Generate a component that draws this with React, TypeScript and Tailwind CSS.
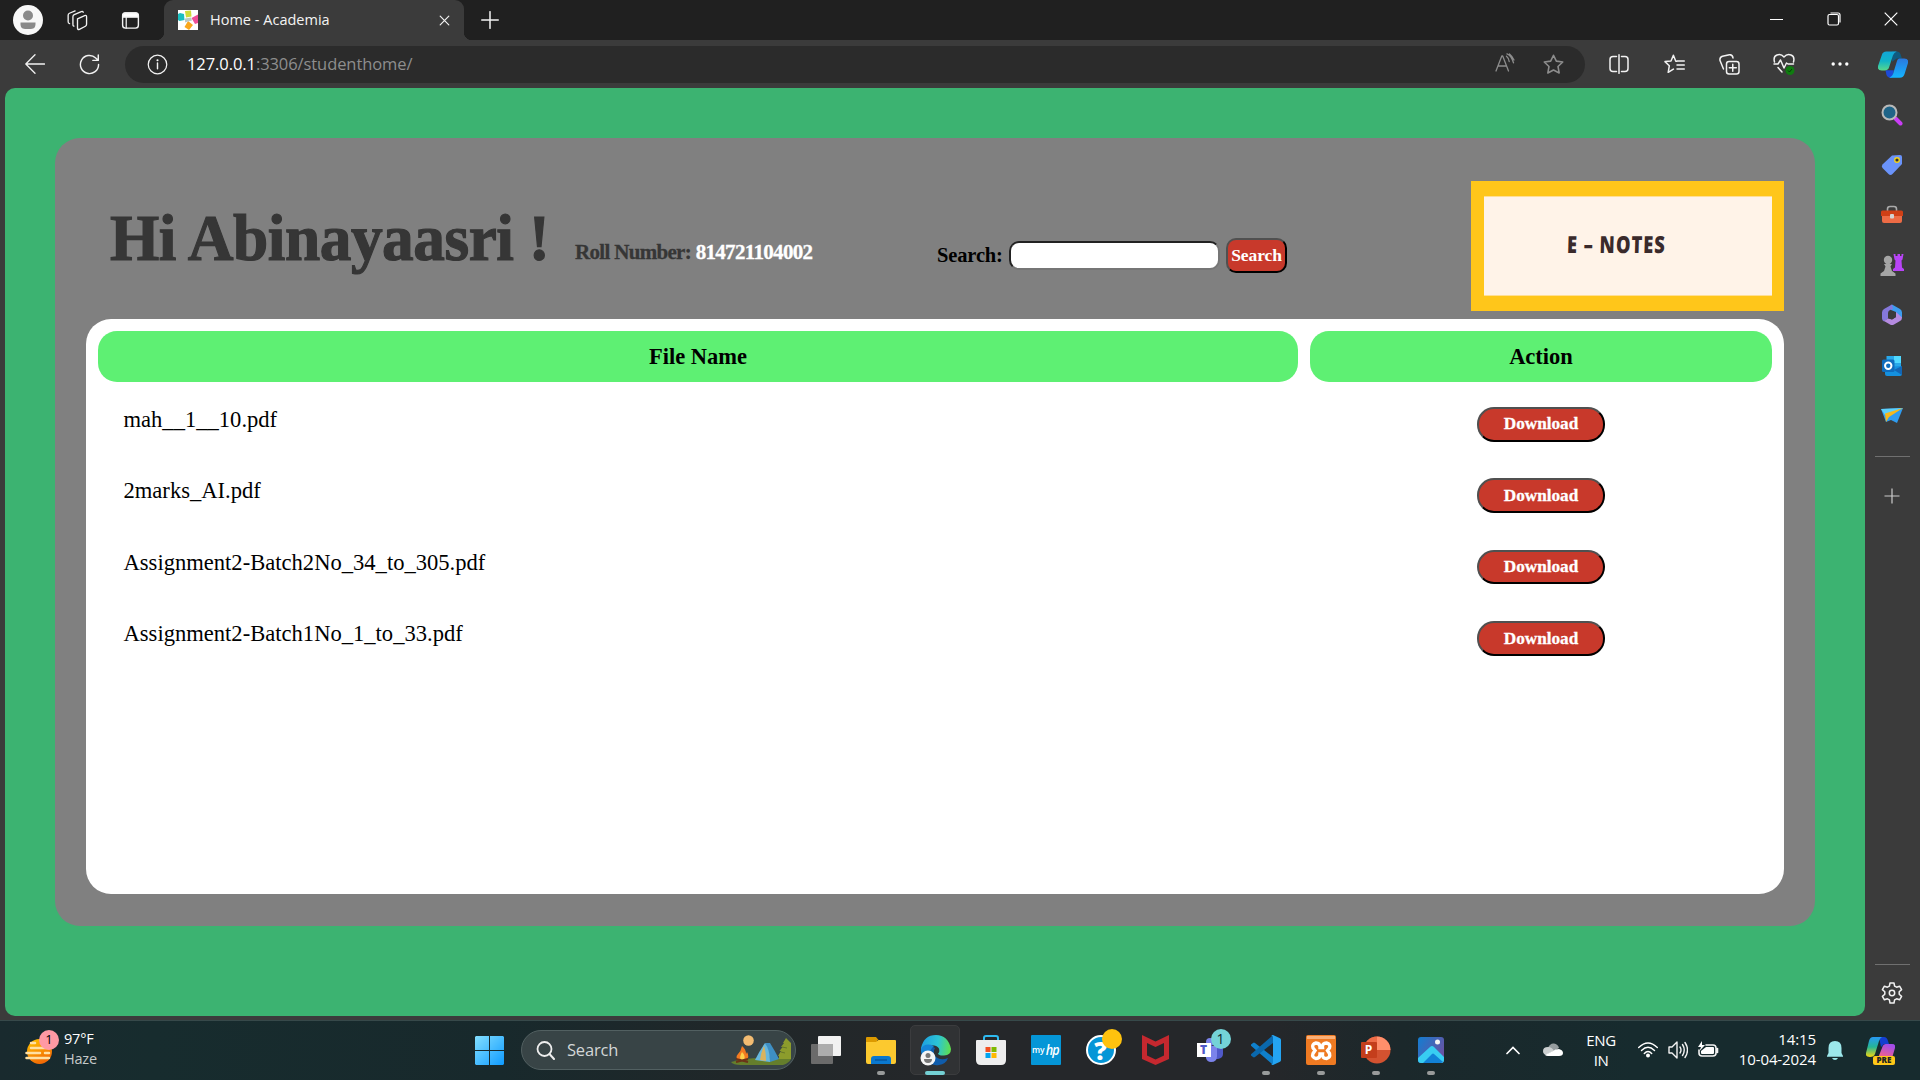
import React from "react";

type IconProps = { w?: number; h?: number; box: string; children: React.ReactNode; className?: string };

function Svg({ w = 24, h = 24, box, children, className }: IconProps) {
  return (
    <svg width={w} height={h} viewBox={box} fill="none" className={className ?? "block shrink-0"}>
      {children}
    </svg>
  );
}

const line = { stroke: "#f2f2f2", strokeWidth: 1.3, strokeLinecap: "round" as const, strokeLinejoin: "round" as const };
const dim = { ...line, stroke: "#8d8d8d" };

function Slot({ className, children }: { className: string; children: React.ReactNode }) {
  return <div className={"flex shrink-0 items-center justify-center " + className}>{children}</div>;
}

function CopilotLogo({ w = 32, h = 28 }: { w?: number; h?: number }) {
  return (
    <Svg w={w} h={h} box="0 0 32 28">
      <defs>
        <linearGradient id="cpA" x1="0" y1="0" x2="0" y2="1">
          <stop offset="0" stopColor="#12a5d8" />
          <stop offset="0.5" stopColor="#10b3c8" />
          <stop offset="1" stopColor="#59d98a" />
        </linearGradient>
        <linearGradient id="cpB" x1="0" y1="0" x2="0" y2="1">
          <stop offset="0" stopColor="#2b78de" />
          <stop offset="1" stopColor="#14b4ff" />
        </linearGradient>
      </defs>
      <path d="M15 0h5q3 0 4 3l1.500 4.500H20L15 11z" fill="#0f5a80" />
      <path d="M8 20h9l-2 8h-2q-3 0-4-3z" fill="#1d4bd8" />
      <path d="M9 0h11q-3 1-4 4l-4 12.500q-1 4-5 4H4q-5 0-4-5L4 4q1-4 5-4z" fill="url(#cpA)" />
      <path d="M23 7.500h5q5 0 4 5l-3.500 11q-1 4.500-5.500 4.500H12q3-1 4-4l4-13q1-3.500 3-3.500z" fill="url(#cpB)" />
    </Svg>
  );
}

function TitleBar() {
  return (
    <div className="flex h-10 shrink-0 bg-[#202020]">
      <Slot className="w-[56px]">
        <Svg w={30} h={30} box="0 0 30 30">
          <circle cx="15" cy="15" r="15" fill="#f8f8f8" />
          <circle cx="15" cy="10.500" r="5" fill="#8a8a8a" />
          <path d="M7.500 17.500h15c.4 7-3 6.500-7.500 6.500s-7.900.5-7.500-6.500z" fill="#8a8a8a" />
        </Svg>
      </Slot>
      <Slot className="w-[42px]">
        <Svg w={21} h={21} box="0 0 22 22">
          <g {...line} strokeWidth="1.400">
            <path d="M11 9.200l7.500-3.400q2-.7 2 1.200v8q0 1.400-1.200 2L13 20.200q-2 .8-2-1.300z" />
            <path d="M7.200 17q-1.200-.5-1-2V7q0-1.500 1.400-2.200L15 1.600q1.500-.5 2 .7" />
            <path d="M2.700 14.200Q1 14 1.200 12.200V5.500Q1.200 4 2.600 3.400L8.500 1" />
          </g>
        </Svg>
      </Slot>
      <Slot className="w-[64px]">
        <Svg w={19} h={19} box="0 0 20 20">
          <rect x="1.700" y="2" width="16.600" height="16" rx="3" {...line} strokeWidth="1.500" />
          <path d="M1.700 6.500V4.500Q2 2 4.500 2h11q2.500 0 2.800 2.500v2zM5.500 6v12" fill="#fff" {...line} />
        </Svg>
      </Slot>
      <div className="relative ml-[2px] flex w-[300px] items-center rounded-t-[9px] bg-[#3b3b3b] pl-[14px]">
        <div className="absolute bottom-0 -left-2 size-2 bg-[radial-gradient(circle_at_0_0,#202020_8px,#3b3b3b_8.5px)]" />
        <div className="absolute -right-2 bottom-0 size-2 bg-[radial-gradient(circle_at_100%_0,#202020_8px,#3b3b3b_8.5px)]" />
        <Svg w={20} h={20} box="0 0 20 20">
          <path d="M0 0h20v20H0z" fill="#fff" />
          <path d="M7 1l6-.5.5 6L8 7.500z" fill="#cddc39" />
          <path d="M0 4l2-1 4 1 .5 6-5 1L0 10z" fill="#19bfc0" />
          <path d="M13.500 8L20 4.500V13l-3 1z" fill="#ee4e96" />
          <path d="M10 11l5 4-4 5-4.500-3z" fill="#f9a61c" />
          <path d="M7 8.500l6-1 1 3-4 1-3 1z" fill="#b9c9c6" />
        </Svg>
        <span className="ml-[12px] font-['Open_Sans'] text-[14.500px] tracking-[0.010px] whitespace-nowrap text-[#f3f3f3]">Home - Academia</span>
        <Svg w={11} h={11} box="0 0 12 12" className="mr-[14px] ml-auto block">
          <path d="M1.300 1.300l9.400 9.400M10.700 1.300L1.300 10.700" {...line} />
        </Svg>
      </div>
      <Slot className="w-[52px]">
        <Svg w={18} h={18} box="0 0 18 18">
          <path d="M9 .7v16.600M.7 9h16.600" {...line} strokeWidth="1.500" />
        </Svg>
      </Slot>
      <div className="ml-auto flex h-[38px] pr-[1px]">
        <Slot className="w-[57px]">
          <div className="h-px w-[13px] bg-white" />
        </Slot>
        <Slot className="w-[57px]">
          <Svg w={14} h={14} box="0 0 14 14">
            <g stroke="#fff" strokeWidth="1.200">
              <rect x="1" y="2.500" width="10.500" height="10.500" rx="1.500" />
              <path d="M3.500 1h7.500q2 0 2 2v7.500" />
            </g>
          </Svg>
        </Slot>
        <Slot className="w-[57px]">
          <Svg w={14} h={14} box="0 0 14 14">
            <path d="M.7.7l12.600 12.600M13.300.7L.7 13.300" stroke="#fff" strokeWidth="1.200" />
          </Svg>
        </Slot>
      </div>
    </div>
  );
}

const starPath = "M10 1.200l2.700 5.600 6.100.8-4.500 4.300 1.100 6.200L10 15.200l-5.400 2.900 1.100-6.200L1.200 7.600l6.100-.8z";

function Toolbar() {
  return (
    <div className="flex h-12 shrink-0 items-center bg-[#3b3b3b] pl-[7px]">
      <Slot className="w-[56px]">
        <Svg w={20} h={20} box="0 0 20 20" className="-mt-px block">
          <path d="M19.500 10H.8M10 .8L.8 10l9.200 9.200" {...line} />
        </Svg>
      </Slot>
      <Slot className="w-[53px]">
        <Svg w={21} h={21} box="0 0 22 22">
          <path d="M20.500 11a9.500 9.500 0 1 1-3-6.900l2.500 2.400M20.200 1v5.700h-5.700" {...line} strokeWidth="1.500" />
        </Svg>
      </Slot>
      <div className="ml-[9px] flex h-[37px] w-[1460px] items-center rounded-full bg-[#2b2b2b] pr-[7px]">
        <Svg w={21} h={21} box="0 0 22 22" className="ml-[22px] block">
          <circle cx="11" cy="11" r="9.700" {...line} />
          <path d="M11 9.500v6" {...line} strokeWidth="1.500" />
          <circle cx="11" cy="6.500" r="1.100" fill="#fff" />
        </Svg>
        <span className="ml-[19px] font-['Open_Sans'] text-[16.500px] tracking-[-0.080px] whitespace-nowrap text-[#8e8e8e]">
          <span className="text-white">127.0.0.1</span>:3306/studenthome/
        </span>
        <Slot className="ml-auto w-[49px]">
          <Svg w={20} h={20} box="0 0 20 20" className="-mt-[2px] block">
            <path d="M1 18L6.800 3h.9l5.800 15M3 13h8.500M11.500 3.200q2.400 2 2.700 5.300M12 .8q4.200 1.500 6.500 9M14.500 1q2.500 2 4.500 6" {...dim} />
          </Svg>
        </Slot>
        <Slot className="w-[49px]">
          <Svg w={21} h={21} box="0 0 20 20">
            <path d={starPath} {...dim} strokeWidth="1.500" />
          </Svg>
        </Slot>
      </div>
      <Slot className="ml-[6px] w-[55px]">
        <Svg w={20} h={20} box="0 0 20 20">
          <path d="M7.500 2.500H4Q1 2.500 1 5.500v9q0 3 3 3h3.500M12.500 2.500H16q3 0 3 3v9q0 3-3 3h-3.500M10 .8v18.500" {...line} strokeWidth="1.500" />
        </Svg>
      </Slot>
      <Slot className="w-[56px]">
        <Svg w={21} h={20} box="0 0 21 20">
          <path d="M13 7.200h-1.200L9.400 1.200 7 7 1 7.600l4.300 4.200-1.100 6.500 5.200-3.200M13 7h7.300M13 11h7.300M13 15h7.300" {...line} strokeWidth="1.500" />
        </Svg>
      </Slot>
      <Slot className="w-[54px]">
        <Svg w={21} h={21} box="0 0 21 21">
          <rect x="7.500" y="7.500" width="12.500" height="12.500" rx="2.500" {...line} strokeWidth="1.500" />
          <path d="M13.750 10.300v7M10.300 13.750h7M4.500 15L1 6.500Q.5 3 3.500 2.200l7-1.500q3-.3 3.500 3.300" {...line} strokeWidth="1.500" />
        </Svg>
      </Slot>
      <Slot className="w-[56px]">
        <Svg w={22} h={22} box="0 0 22 22">
          <path d="M1.500 9Q0 3.500 4 2q4-1.500 7 2 3-3.500 7-2 4 1.500 2.500 7M1 11h4l2.500-4 3.500 8 2.500-5 1.500 1h5.500M5 14.500L9 19" {...line} strokeWidth="1.500" />
          <circle cx="17" cy="17.500" r="4.500" fill="#107c10" />
          <path d="M15 17.500l1.500 1.500 2.500-3" stroke="#063d06" />
        </Svg>
      </Slot>
      <Slot className="w-[55px]">
        <Svg w={18} h={6} box="0 0 18 6">
          <g fill="#fff">
            <circle cx="2.200" cy="3" r="1.700" />
            <circle cx="9" cy="3" r="1.700" />
            <circle cx="15.800" cy="3" r="1.700" />
          </g>
        </Svg>
      </Slot>
      <Slot className="w-[52px]">
        <CopilotLogo w={30} h={27} />
      </Slot>
    </div>
  );
}

function SideBar() {
  const s = "h-[50.200px] w-full";
  return (
    <div className="flex h-[932px] w-[54px] shrink-0 flex-col items-center pt-[1.500px]">
      <Slot className={s}>
        <Svg w={22} h={22} box="0 0 22 22">
          <path d="M14.500 14.500l5 5" stroke="#c93df5" strokeWidth="4" strokeLinecap="round" />
          <circle cx="8.500" cy="8.500" r="7" fill="#1f6488" stroke="#b9b9b9" strokeWidth="2" />
        </Svg>
      </Slot>
      <Slot className={s}>
        <Svg w={22} h={22} box="0 0 22 22">
          <path d="M11 1.500L19 1q2 0 2 2v7l-9.500 10q-2 2-4 0l-6-6q-1.500-2 0-3.500z" fill="#6a93fa" />
          <circle cx="16" cy="6" r="2.300" fill="#333" stroke="#f3d21c" strokeWidth="1.400" />
        </Svg>
      </Slot>
      <Slot className={s}>
        <Svg w={24} h={20} box="0 0 24 20">
          <path d="M7.500 6V4q0-2.500 2.500-2.500h4Q16.500 1.500 16.500 4v2" stroke="#aaa" strokeWidth="1.600" />
          <path d="M2 10h20v6q0 2-2 2H4q-2 0-2-2z" fill="#ed6b45" />
          <path d="M1 7q0-1.500 1.500-1.500h19Q23 5.500 23 7v4H1z" fill="#cf3f16" />
          <rect x="10" y="9" width="4" height="4.500" rx="1" fill="#d3d3d3" />
        </Svg>
      </Slot>
      <Slot className={s}>
        <Svg w={24} h={24} box="0 0 24 24">
          <path d="M13.500 1h2v2h2V1h2.500v2h1.500V1h2l-1 5.500-1 1 .5 7 2 1.500v2H13v-2l2-1.500.5-7-1-1z" fill="#b844f7" />
          <circle cx="8" cy="7" r="4.200" fill="#a5a5a5" />
          <path d="M4 11h8l-1.500 2.500L12 18l3.500 2.500V23H.5v-2.500L4 18l1.500-4.500z" fill="#a5a5a5" />
        </Svg>
      </Slot>
      <Slot className={s}>
        <Svg w={22} h={22} box="0 0 22 22">
          <path d="M11 .5l8 4.500q2 1 2 3.500v6l-6-3V8l-5-2-2-3z" fill="#3d9df0" />
          <path d="M11 .5L3 5Q1 6 1 8.500v6q0 2 2 3l4-3V9q0-2 2-3l3-1z" fill="#8578db" />
          <path d="M21 13.500q0 2.500-2 3.500l-6 3.500q-2 1-4 0l-6-3.500 4-2.500 4 1 4-2.500V8z" fill="#b58be0" />
          <path d="M8 8.500l3-1.500 4 2v4l-4 2.500L8 14z" fill="#3b3b3b" />
        </Svg>
      </Slot>
      <Slot className={s}>
        <Svg w={20} h={20} box="0 0 20 20">
          <path d="M4.500 0H18q1 0 1 1v10H4.500z" fill="#28a8ea" />
          <path d="M12 0h7v7h-7z" fill="#50d9ff" />
          <path d="M3 11l16-1 1 1v7q0 2-2 2H5q-2 0-2-2z" fill="#1490df" />
          <path d="M12 14l8-4v9z" fill="#1366b5" />
          <rect x="0" y="3.500" width="12.500" height="12.500" rx="1.500" fill="#0f6cbd" />
          <circle cx="6.250" cy="9.750" r="3.200" stroke="#fff" strokeWidth="2" />
        </Svg>
      </Slot>
      <Slot className={s}>
        <Svg w={22} h={17} box="0 0 22 17">
          <path d="M0 2L22 1l-6 15-6-3-5 2z" fill="#2f9cf0" />
          <path d="M0 2L22 1 4 8z" fill="#5dd0fa" />
          <path d="M22 1L4 6.500l1 8.500 3-5z" fill="#f5b81c" />
        </Svg>
      </Slot>
      <div className="mt-[15.500px] h-px w-[35px] shrink-0 bg-[#707070]" />
      <Svg w={16} h={16} box="0 0 16 16" className="mt-[31px] block">
        <path d="M8 .5v15M.5 8h15" stroke="#ccc" strokeWidth="1.200" />
      </Svg>
      <div className="mt-auto h-px w-[35px] shrink-0 bg-[#707070]" />
      <Svg w={22} h={22} box="0 0 22 22" className="mt-[17px] mb-[16px] block">
        <path d="M9 1h4l.6 3.100 2 1.100 3-1 2 3.400-2.400 2.100v2.600l2.400 2.100-2 3.400-3-1-2 1.100L13 21H9l-.6-3.100-2-1.100-3 1-2-3.400 2.400-2.100V9.700L1.400 7.600l2-3.400 3 1 2-1.100z" {...line} strokeWidth="1.500" />
        <circle cx="11" cy="11" r="2.700" {...line} strokeWidth="1.500" />
      </Svg>
    </div>
  );
}

const files = [
  "mah__1__10.pdf",
  "2marks_AI.pdf",
  "Assignment2-Batch2No_34_to_305.pdf",
  "Assignment2-Batch1No_1_to_33.pdf",
];

const redButton =
  "shrink-0 border-2 border-t-[#505050] border-l-[#505050] border-r-black border-b-black bg-[#c8392b] font-bold text-white";

function StudentHome() {
  return (
    <div className="h-[928px] w-[1860px] shrink-0 rounded-[10px] bg-[#3cb371] pt-[50px] pl-[50px] font-['Liberation_Serif']">
      <div className="h-[788px] w-[1760px] rounded-[25px] bg-[#808080] px-[31px] pt-[43px]">
        <div className="flex h-[138px] w-[1698px]">
          <h1 className="mt-[12px] ml-[24px] w-[440px] origin-left scale-x-[0.960] text-[66px] leading-[90px] font-bold tracking-[-0.500px] whitespace-nowrap text-[#363636] [-webkit-text-stroke:1.2px_#363636]">
            Hi Abinayaasri !
          </h1>
          <p className="mt-[56px] ml-[25px] w-[240px] text-[21px] leading-[30px] font-bold tracking-[-0.680px] whitespace-nowrap text-[#363636] [-webkit-text-stroke:0.3px]">
            Roll Number: <span className="text-white">814721104002</span>
          </p>
          <div className="mt-[57px] ml-[122px] flex h-[35px] items-center">
            <label className="-mt-[1px] w-[72px] text-[20.500px] font-bold tracking-[-0.150px] whitespace-nowrap text-black">Search:</label>
            <input className="h-[29px] w-[211px] rounded-[10px] border-2 border-t-[#222] border-r-[#767676] border-b-[#767676] border-l-[#222] bg-white" />
            <button className={redButton + " ml-[6px] h-[35px] w-[61px] rounded-[10px] text-[17.500px] tracking-[-0.100px]"}>Search</button>
          </div>
          <div className="ml-auto h-[130px] w-[313px] bg-[#ffc61a] px-[12.500px] py-[15px]">
            <div className="flex h-full items-center justify-center border-y border-[#ffdf93] bg-[#fff3e8]">
              <span className="-mt-[3px] -ml-[23px] scale-x-[0.780] -skew-x-2 font-['Open_Sans'] text-[23.500px] font-extrabold tracking-[1.250px] whitespace-nowrap text-[#3a2a2b]">
                E – NOTES
              </span>
            </div>
          </div>
        </div>
        <div className="h-[575px] w-[1698px] rounded-[25px] bg-white p-[12px]">
          <div className="flex gap-[12px] text-center text-[22.500px] leading-[51px] font-bold text-black">
            <div className="h-[51px] w-[1200px] rounded-[19px] bg-[#5ef073]">File Name</div>
            <div className="h-[51px] w-[462px] rounded-[19px] bg-[#5ef073]">Action</div>
          </div>
          {files.map((name) => (
            <div key={name} className="flex h-[71.400px] gap-[12px]">
              <div className="w-[1200px] pt-[25px] pl-[25.500px] text-[22.580px] leading-[26px] text-black">{name}</div>
              <div className="flex w-[462px] justify-center pt-[25px]">
                <button className={redButton + " h-[34.500px] w-[128px] rounded-[17px] text-[17.200px] [-webkit-text-stroke:0.300px]"}>Download</button>
              </div>
            </div>
          ))}
        </div>
      </div>
    </div>
  );
}

function TaskApp({ children, running, active }: { children: React.ReactNode; running?: boolean; active?: boolean }) {
  return (
    <div className="relative flex h-[60px] w-[55px] shrink-0 items-center justify-center">
      {active && <div className="absolute top-[4px] left-[2px] h-[50px] w-[50px] rounded-[5px] border border-[#3b3c3e] bg-[#303234]" />}
      <div className="relative -mt-px">{children}</div>
      {running && <div className="absolute bottom-[6px] left-[24px] h-[4px] w-[8px] rounded-full bg-[#999b9b]" />}
      {active && <div className="absolute bottom-[6px] left-[17px] h-[4px] w-[20px] rounded-full bg-[#74d0d4]" />}
    </div>
  );
}

function Taskbar() {
  return (
    <div className="flex h-[60px] shrink-0 items-center border-t border-[#37494a] bg-[linear-gradient(90deg,#192a2e_0%,#172c2e_8%,#18292c_26%,#202729_38%,#25272a_50%,#25272a_66%,#1b282b_73%,#172b2e_85%,#172b2e_100%)] font-['Open_Sans'] text-white">
      <div className="relative -mt-[2px] ml-[25px] size-[34px]">
        <Svg w={34} h={34} box="0 0 34 34">
          <defs>
            <linearGradient id="sun" x1="0" y1="0" x2="0.500" y2="1">
              <stop stopColor="#ffc700" />
              <stop offset="1" stopColor="#f26a05" />
            </linearGradient>
          </defs>
          <circle cx="14.500" cy="18.500" r="12.500" fill="url(#sun)" />
          <path d="M6 10h4M6 15h17M1.500 20H15M20 20h4M1.500 25H24" stroke="#ffe0a3" strokeWidth="2.500" strokeLinecap="round" />
        </Svg>
        <div className="absolute -top-[3px] left-[14px] flex size-5 items-center justify-center rounded-full bg-[#ff99a4] text-[13px] text-black">1</div>
      </div>
      <div className="-mt-[3px] ml-[5px] w-[80px] text-[14.500px] leading-[20px] tracking-[-0.200px]">
        <div>97°F</div>
        <div className="text-[#c5c9c9]">Haze</div>
      </div>
      <Svg w={29} h={29} box="0 0 29 29" className="-mt-px ml-[331px] block shrink-0">
        <defs>
          <linearGradient id="win" x1="0" y1="0" x2="1" y2="1">
            <stop stopColor="#83dfff" />
            <stop offset="1" stopColor="#0f9bff" />
          </linearGradient>
        </defs>
        <path d="M1 0h13v14H0V1zM15 0h13l1 1v13H15zM0 15h14v14H1l-1-1zM15 15h14v13l-1 1H15z" fill="url(#win)" />
      </Svg>
      <div className="-mt-px ml-[17px] flex h-10 w-[275px] shrink-0 items-center overflow-hidden rounded-full border border-[#526061] bg-[#384446] pl-[14px]">
        <Svg w={19} h={19} box="0 0 19 19">
          <circle cx="8.500" cy="8" r="7" stroke="#eee" strokeWidth="1.800" />
          <path d="M13.500 13l4.500 5" stroke="#eee" strokeWidth="2" strokeLinecap="round" />
        </Svg>
        <span className="ml-[12px] text-[16.500px] tracking-[-0.200px] text-[#d3d7d7]">Search</span>
        <Svg w={62} h={32} box="0 0 62 32" className="mt-[2px] mr-[2px] ml-auto block">
          <path d="M0 27q14-4 30-4 18 0 30 1-2 4-8 6H10Q2 30 0 27z" fill="#657e2c" />
          <circle cx="17.500" cy="5.500" r="5.300" fill="#f2bc72" />
          <path d="M55 3l-3 5h1l-3 4h1.500l-3 4H50l-3 5h1v3h12V8z" fill="#8c9c2c" />
          <path d="M50 17l4 1M51 12l5 1" stroke="#66772a" />
          <path d="M34 8h5q5 8 9 16l-9 3q-1-11-5-19z" fill="#3e8fc4" />
          <path d="M34 8q-5 7-10 17l15 2q0-12-5-19z" fill="#66b7de" />
          <path d="M33 11q-3 6-4 14l6 1q0-9-2-15z" fill="#d9b35e" />
          <path d="M11 11q-1 5-4 8t0 6h8q4-3 1-8l-1 2q0-5-4-8z" fill="#f47b20" />
          <path d="M11 17q-3 5-1 8h3q2-4-2-8z" fill="#ffd24a" />
          <path d="M5 24l12 3M5 27l12-3" stroke="#6b3318" strokeWidth="2" />
        </Svg>
      </div>
      <div className="ml-[2px] flex">
        <TaskApp>
          <Svg w={30} h={28} box="0 0 30 28">
            <rect x="7" width="23" height="20" rx="1" fill="#f2f2f2" />
            <rect y="8" width="22" height="20" rx="1" fill="#6b6b6b" />
            <path d="M7 8h15v12H7z" fill="#adadad" />
          </Svg>
        </TaskApp>
        <TaskApp running>
          <Svg w={30} h={27} box="0 0 30 27">
            <path d="M0 1q0-1 1-1h9l3 3.500h-2V7H0z" fill="#dc9a00" />
            <path d="M0 5h10l2.500-2H29q1 0 1 1v21q0 2-2 2H2q-2 0-2-2z" fill="#fcc92f" />
            <path d="M5 27v-5q0-3 3-3h14q3 0 3 3v5z" fill="#0a78cf" />
            <path d="M9 23h12" stroke="#064f93" strokeWidth="1.200" />
          </Svg>
        </TaskApp>
        <TaskApp active>
          <Svg w={31} h={31} box="0 0 31 31">
            <defs>
              <linearGradient id="edge" x1="0" y1="0.500" x2="1" y2="0.600">
                <stop stopColor="#1d9fe0" />
                <stop offset="0.550" stopColor="#2cc5d5" />
                <stop offset="1" stopColor="#5fe04c" />
              </linearGradient>
            </defs>
            <path d="M1 15q0 8 5 12 6 4 13 3 7-1 9-7-7 3-12-1-4-4-1-9Q5 6 1 15z" fill="#0f5cab" />
            <path d="M1 13Q4 0 16 0t15 14q0 6-7 6.500-5 .5-6-2 2-1 1-5-3-4-9-3Q4 11 1 17z" fill="url(#edge)" />
            <path d="M1 14q4-7 13-3-5 4-4 10-9 3-9-7z" fill="#1584d6" />
            <circle cx="8" cy="23" r="7.500" fill="#f5f5f5" />
            <circle cx="8" cy="20.500" r="2.500" fill="#777" />
            <path d="M4 24h8q0 4-4 4t-4-4z" fill="#777" />
          </Svg>
        </TaskApp>
        <TaskApp>
          <Svg w={30} h={30} box="0 0 30 30">
            <path d="M8 6V3q0-2 2-2h10q2 0 2 2v3" stroke="#2ebaf0" strokeWidth="2" />
            <path d="M1 5h28q1 0 1 1v19q0 5-5 5H5q-5 0-5-5V6q0-1 1-1z" fill="#eeeeee" />
            <path d="M9.500 12h5v5h-5z" fill="#f25022" />
            <path d="M15.500 12h5v5h-5z" fill="#7fba00" />
            <path d="M9.500 18h5v5h-5z" fill="#00a4ef" />
            <path d="M15.500 18h5v5h-5z" fill="#ffb900" />
          </Svg>
        </TaskApp>
        <TaskApp>
          <div className="flex size-[30px] items-center justify-center rounded-[1px] bg-[#0596d7] leading-none text-white">
            <span className="text-[8.500px] font-semibold">my</span>
            <span className="scale-x-90 text-[14px] font-semibold tracking-[-1px] italic">hp</span>
          </div>
        </TaskApp>
        <TaskApp>
          <div className="flex size-[30px] items-center justify-center rounded-full border-2 border-white bg-[#0596d7] text-[25px] leading-none font-extrabold">?</div>
          <div className="absolute -top-[6px] left-[16px] size-5 rounded-full bg-[#ffc20e]" />
        </TaskApp>
        <TaskApp>
          <Svg w={27} h={30} box="0 0 27 30">
            <path d="M0 0l13.500 6.500L27 0v24l-13.500 6L0 24zM5 8v12.500l8.500 4 8.500-4V8l-8.500 4z" fill="#c5282f" fillRule="evenodd" />
          </Svg>
        </TaskApp>
        <TaskApp>
          <div className="relative h-[26px] w-[30px]">
            <Svg w={30} h={26} box="0 0 30 26">
              <circle cx="14" cy="5" r="4" fill="#7b83eb" />
              <path d="M16 9h9q2 0 2 2v6q0 4-5 5h-6z" fill="#5059c9" />
              <path d="M10 9h11v10q0 6-6 6-4 0-5-4z" fill="#7b83eb" />
            </Svg>
            <div className="absolute top-[6px] left-[1px] flex size-[14px] items-center justify-center bg-white text-[12px] leading-none font-extrabold text-[#5059c9]">T</div>
            <div className="absolute -top-[8px] left-[15px] flex size-5 items-center justify-center rounded-full bg-[#74d3d8] text-[14px] leading-none text-[#10282a]">1</div>
          </div>
        </TaskApp>
        <TaskApp running>
          <Svg w={30} h={30} box="0 0 30 30">
            <path d="M0 9.500l2-1.600q1-.6 2 .1L22 22v8L.3 11q-.8-.8-.3-1.500z" fill="#0f80cc" />
            <path d="M0 20.500l2 1.600q1 .6 2-.1L22 8V0L.3 19q-.8.800-.3 1.500z" fill="#0a68ad" />
            <path d="M22 0l7 3.300q1 .5 1 1.700v20q0 1.200-1 1.700L22 30q-1.500 0-2-1 2 1 2-1.500v-25Q22 0 20 1q1-1 2-1z" fill="#24a4f2" />
          </Svg>
        </TaskApp>
        <TaskApp running>
          <Svg w={30} h={30} box="0 0 30 30">
            <rect width="30" height="30" rx="2" fill="#ef7a22" />
            <path d="M1 1h28v3H1z" fill="#f9b078" />
            <path
              d="M10 8q4 0 4 4.500h2.500Q16 8 20.500 8q4.500 1 3 5l-2 2.500 2 3q1 4-3 5-4.500 0-4-4.500H14q0 4.500-4 4.500-4.500-1-3-5l2-3-2-2.500q-1.500-4 3-5z"
              stroke="#fff"
              strokeWidth="3.400"
            />
          </Svg>
        </TaskApp>
        <TaskApp running>
          <div className="relative h-[28px] w-[30px]">
            <Svg w={30} h={28} box="0 0 30 28">
              <circle cx="16" cy="14" r="13.500" fill="#d35230" />
              <path d="M16 .5A13.500 13.500 0 0 0 2.500 14H16z" fill="#ed6c47" />
              <path d="M16 .5A13.500 13.500 0 0 1 29.500 14H16z" fill="#ff8f6b" />
            </Svg>
            <div className="absolute top-[6px] left-0 flex size-[16px] items-center justify-center rounded-[1px] bg-[#c43e1c] text-[12px] leading-none font-bold">P</div>
          </div>
        </TaskApp>
        <TaskApp running>
          <Svg w={26} h={26} box="0 0 26 26">
            <defs>
              <linearGradient id="photo" x1="0" y1="0" x2="1" y2="0.600">
                <stop stopColor="#127ed2" />
                <stop offset="1" stopColor="#6a52a3" />
              </linearGradient>
            </defs>
            <rect width="26" height="26" rx="3" fill="url(#photo)" />
            <path d="M0 21L12 10q2-2 4 0l10 10v3q0 3-3 3H3q-3 0-3-3z" fill="#38cdf2" />
            <path d="M5 26l9-9q1-1 2 0l9 8-2 1z" fill="#1281d6" />
            <circle cx="19.500" cy="5" r="2.500" fill="#f4f4f4" />
          </Svg>
        </TaskApp>
      </div>
      <Slot className="-mt-px ml-[35px] w-[40px]">
        <Svg w={14} h={9} box="0 0 14 9">
          <path d="M1 7.500l6-6 6 6" stroke="#fff" strokeWidth="1.700" strokeLinecap="round" />
        </Svg>
      </Slot>
      <Slot className="-mt-px w-[40px]">
        <Svg w={20} h={14} box="0 0 20 14">
          <path d="M5 5q2-5 6-4.500Q15 1 16 5l-5 3z" fill="#969d9f" />
          <path d="M3 12q-3-1-3-4 0-4 5-4 4 0 6 4z" fill="#cbcfd0" />
          <path d="M2 12l8-4q2-2 6-2 4 1 4 4t-4 3H5q-2 0-3-1z" fill="#fff" />
        </Svg>
      </Slot>
      <div className="-mt-[2px] w-[56px] text-center text-[15px] leading-[20px] tracking-[-0.400px]">
        <div>ENG</div>
        <div>IN</div>
      </div>
      <Slot className="-mt-px ml-[9px] w-[20px]">
        <Svg w={20} h={16} box="0 0 20 16">
          <path d="M.7 5.500q9.300-9 18.600 0M3.500 8.600q6.500-6.500 13 0M6.300 11.500q3.700-4 7.400 0" stroke="#fff" strokeWidth="1.400" strokeLinecap="round" />
          <circle cx="10" cy="13.500" r="2" fill="#fff" />
        </Svg>
      </Slot>
      <Slot className="-mt-px ml-[10px] w-[20px]">
        <Svg w={20} h={18} box="0 0 20 18">
          <path d="M1 6h3l5-5v16l-5-5H1zM12 6q2 3 0 6M14.500 3.500q3.500 5.500 0 11M17 1.500q5 7.500 0 15" {...line} strokeWidth="1.400" />
        </Svg>
      </Slot>
      <Slot className="-mt-[3px] ml-[10px] w-[20px]">
        <Svg w={21} h={17} box="0 0 21 17">
          <path d="M8 4h7q3 0 3 3v5q0 3-3 3H4q-3 0-3-3V9M19.500 7.500v4" {...line} strokeWidth="1.600" />
          <path d="M8 6h7q1 0 1 1v5q0 1-1 1H4q-1 0-1-1v-2zM4 0L0 6h3L1.500 10 7 4H4z" fill="#fff" />
        </Svg>
      </Slot>
      <div className="-mt-[3px] ml-[8px] w-[90px] text-right text-[15px] leading-[20px] tracking-[-0.100px] whitespace-nowrap">
        <div>14:15</div>
        <div>10-04-2024</div>
      </div>
      <Svg w={16} h={19} box="0 0 16 19" className="ml-[11px] block shrink-0">
        <path d="M8 0q6.500 0 6.500 7v5l1.500 3v.7H0V15l1.500-3V7Q1.500 0 8 0zM5 17h6q-1 2-3 2t-3-2z" fill="#9ce8eb" />
      </Svg>
      <div className="relative ml-[23px] h-[28px] w-[30px] shrink-0">
        <Svg w={29} h={25} box="0 0 29 25">
          <defs>
            <linearGradient id="preA" x1="0" y1="0" x2="0" y2="1">
              <stop stopColor="#2799f5" />
              <stop offset="0.500" stopColor="#25b595" />
              <stop offset="1" stopColor="#f4d70d" />
            </linearGradient>
            <linearGradient id="preB" x1="0" y1="1" x2="0.400" y2="0">
              <stop stopColor="#ff6577" />
              <stop offset="1" stopColor="#a54de8" />
            </linearGradient>
          </defs>
          <path d="M13 0h5q3 0 4 4l1 3h-5l-3 3z" fill="#143fd0" />
          <path d="M7 0h9q-2 1-3 4L9 17q-1 3-5 3-5 0-4-4L3 4Q4 0 7 0z" fill="url(#preA)" />
          <path d="M20 7h6q4 0 3 4l-3 10H12l4-10q1-4 4-4z" fill="url(#preB)" />
        </Svg>
        <div className="absolute top-[19px] left-[7px] flex h-[9px] w-[22px] items-center justify-center rounded-[2px] bg-[#ffc818] text-[8px] leading-none font-extrabold text-[#222]">PRE</div>
      </div>
    </div>
  );
}

export default function App() {
  return (
    <div className="flex h-[1080px] w-[1920px] flex-col overflow-hidden bg-[#3b3b3b] font-['Open_Sans']">
      <TitleBar />
      <Toolbar />
      <div className="flex h-[932px] shrink-0 pl-[5px]">
        <StudentHome />
        <SideBar />
      </div>
      <Taskbar />
    </div>
  );
}
